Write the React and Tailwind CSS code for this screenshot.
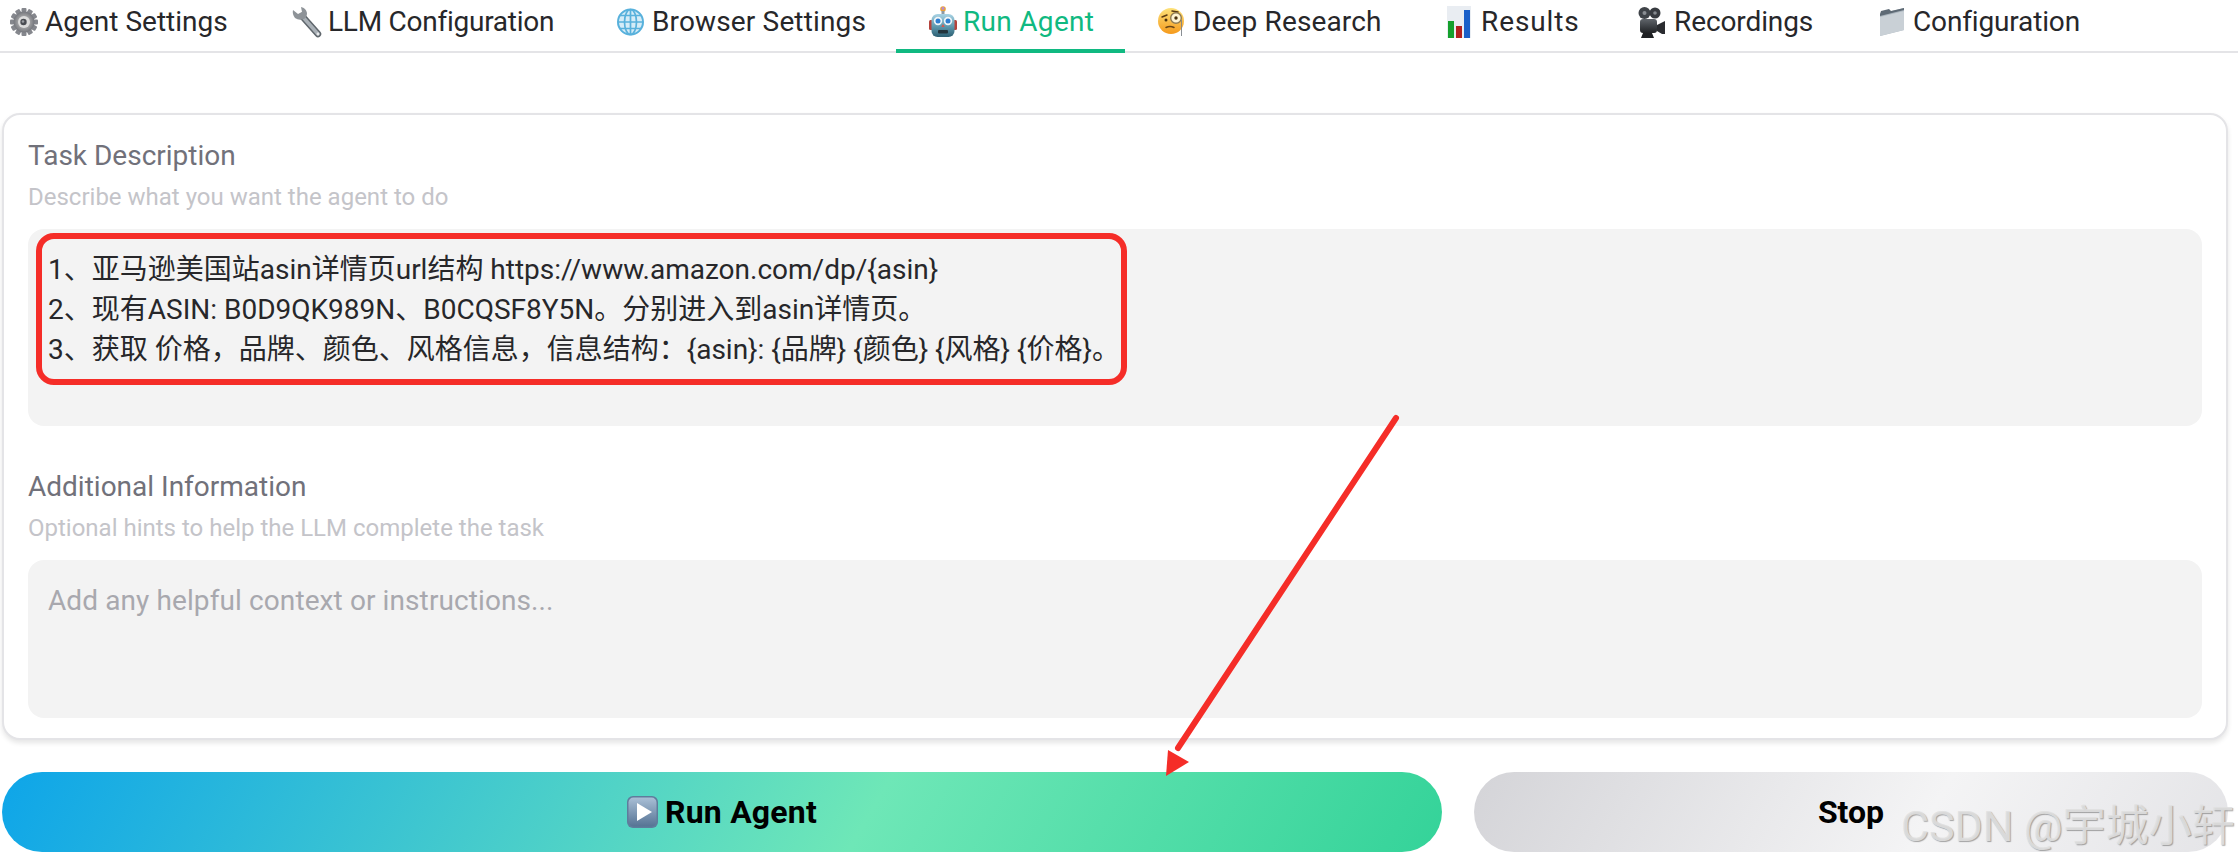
const F = "font-['Roboto','Noto_Sans_CJK_SC',sans-serif]";

function Gear() {
  const teeth = [0, 30, 60, 90, 120, 150];
  return (
    <svg width="28" height="30" viewBox="0 0 28 30" className="shrink-0">
      <defs>
        <radialGradient id="g1"><stop offset="0.35" stopColor="#b5b5b5" /><stop offset="1" stopColor="#74767c" /></radialGradient>
      </defs>
      {teeth.map((a) => (
        <rect key={a} x="11.5" y="1" width="5" height="28" rx="1" fill="#85878d" transform={`rotate(${a} 14 15)`} />
      ))}
      <circle cx="14" cy="15" r="10.5" fill="url(#g1)" />
      <circle cx="14" cy="15" r="6" fill="#dcdcdc" />
      <circle cx="13.5" cy="15" r="3.2" fill="#4a4d53" />
      <circle cx="13" cy="14.5" r="1.3" fill="#9a9da2" />
    </svg>
  );
}
function Wrench() {
  return (
    <svg width="32" height="34" viewBox="0 0 32 34" className="shrink-0" fill="none">
      <path d="M27 29 L11 11" stroke="#5f666c" strokeWidth="6.5" strokeLinecap="round" />
      <path d="M27 29 L11 11" stroke="#aab1b7" strokeWidth="3.5" strokeLinecap="round" />
      <path d="M2 5 L7 9 L11 7 L10 2 Q15 3 16 8 Q16 12 13 14 Q8 16 4 13 Q1 9 2 5Z" fill="#8e9398" />
      <circle cx="27" cy="29" r="1.4" fill="#e8eaec" />
    </svg>
  );
}
function Globe() {
  return (
    <svg width="27" height="28" viewBox="0 0 27 28" className="shrink-0" fill="none">
      <circle cx="13.5" cy="14" r="13" fill="#d5ecf7" />
      <circle cx="13.5" cy="14" r="12.5" stroke="#58b1dc" strokeWidth="2" />
      <ellipse cx="13.5" cy="14" rx="6" ry="12.5" stroke="#58b1dc" strokeWidth="1.7" />
      <path d="M13.5 1.5v25M1 14h25M3 7.5h21M3 20.5h21" stroke="#58b1dc" strokeWidth="1.7" />
    </svg>
  );
}
function Robot() {
  return (
    <svg width="28" height="32" viewBox="0 0 28 32" className="shrink-0">
      <defs>
        <linearGradient id="g4" x1="0" y1="0" x2="0" y2="1"><stop offset="0" stopColor="#a9d3e4" /><stop offset="0.55" stopColor="#5d98ad" /><stop offset="1" stopColor="#2c5f72" /></linearGradient>
      </defs>
      <circle cx="14" cy="3" r="2.8" fill="#e9a13c" />
      <circle cx="14" cy="2.4" r="1.3" fill="#b58ad8" />
      <rect x="12.5" y="5" width="3" height="4" fill="#8d99a3" />
      <rect x="0" y="14" width="4" height="10" rx="1.5" fill="#b5433c" />
      <rect x="24" y="14" width="4" height="10" rx="1.5" fill="#b5433c" />
      <rect x="2.5" y="8" width="23" height="23" rx="6" fill="url(#g4)" />
      <circle cx="9" cy="15" r="4.2" fill="#f1f6f8" />
      <circle cx="19" cy="15" r="4.2" fill="#f1f6f8" />
      <circle cx="9" cy="15" r="2.5" fill="#2f7fd0" />
      <circle cx="19" cy="15" r="2.5" fill="#2f7fd0" />
      <path d="M14 18l1.7 3h-3.4z" fill="#d9574d" />
      <rect x="9" y="24" width="10" height="3.5" rx="1" fill="#23343c" />
    </svg>
  );
}
function Monocle() {
  return (
    <svg width="27" height="30" viewBox="0 0 27 30" className="shrink-0" fill="none">
      <defs>
        <linearGradient id="g2" x1="0" y1="0" x2="0" y2="1"><stop offset="0" stopColor="#fde27a" /><stop offset="1" stopColor="#f59a1c" /></linearGradient>
      </defs>
      <circle cx="13" cy="14" r="13" fill="url(#g2)" />
      <path d="M4 10l5-2M14 4l6 1" stroke="#5b3b12" strokeWidth="1.5" strokeLinecap="round" />
      <circle cx="8" cy="13" r="1.5" fill="#4a3210" />
      <circle cx="18" cy="11" r="5.3" fill="#fff4d2" stroke="#8e7a52" strokeWidth="1.4" />
      <circle cx="18" cy="11" r="1.7" fill="#4a3210" />
      <path d="M8 20.5q4-2 8 0" stroke="#6a4515" strokeWidth="1.5" strokeLinecap="round" />
      <path d="M23.5 13v16" stroke="#7d8288" strokeWidth="0.9" />
    </svg>
  );
}
function Chart() {
  return (
    <svg width="24" height="32" viewBox="0 0 24 32" className="shrink-0">
      <rect width="24" height="32" fill="#e9edf2" />
      <rect x="1" y="15" width="6" height="17" fill="#14a02c" />
      <rect x="9" y="20" width="6" height="12" fill="#b2211f" />
      <rect x="17" y="4" width="6" height="28" fill="#1a5fc8" />
    </svg>
  );
}
function Camera() {
  return (
    <svg width="28" height="32" viewBox="0 0 28 32" className="shrink-0">
      <defs>
        <linearGradient id="g5" x1="0" y1="0" x2="0" y2="1"><stop offset="0" stopColor="#5f646a" /><stop offset="1" stopColor="#1f2124" /></linearGradient>
      </defs>
      <circle cx="6.5" cy="7" r="6" fill="#3f4348" />
      <circle cx="6.5" cy="7" r="2" fill="#8a8e93" />
      <circle cx="17" cy="7" r="5.5" fill="#383b40" />
      <circle cx="17" cy="7" r="1.8" fill="#85898e" />
      <rect x="2" y="13" width="17" height="14" rx="3" fill="url(#g5)" />
      <path d="M19 19l8-4v13h-3l-5-3z" fill="#2a2c30" />
      <path d="M5 27h9l2 5H3z" fill="#1e2023" />
    </svg>
  );
}
function Folder() {
  return (
    <svg width="26" height="30" viewBox="0 0 26 30" className="shrink-0">
      <path d="M1 7 L25 1 V23 L1 29Z" fill="#aab4bd" />
      <path d="M1 7 L2 4 L10 2 L12 4 L25 1 V3 L1 9Z" fill="#5e6a75" />
      <path d="M1 10 L25 4 V23 L1 29Z" fill="#c9d0d6" />
    </svg>
  );
}
function Play() {
  return (
    <svg width="31" height="32" viewBox="0 0 31 32" className="shrink-0">
      <defs>
        <linearGradient id="g3" x1="0" y1="0" x2="0" y2="1"><stop offset="0" stopColor="#a9bfd6" /><stop offset="1" stopColor="#567394" /></linearGradient>
      </defs>
      <rect width="31" height="32" rx="6" fill="#5f7c9c" />
      <rect x="1.5" y="1.5" width="28" height="29" rx="5" fill="url(#g3)" />
      <path d="M10 7 L25 16 L10 25Z" fill="#fff" />
    </svg>
  );
}

const tabs = [
  { w: "w-[281px]", gap: "gap-[7px]", I: Gear, t: "Agent Settings", sp: "tracking-[0px]" },
  { w: "w-[326px]", gap: "gap-[5px]", I: Wrench, t: "LLM Configuration", sp: "tracking-[-0.25px]" },
  { w: "w-[312px]", gap: "gap-[8px]", I: Globe, t: "Browser Settings", sp: "tracking-[0.15px]" },
  { w: "w-[229px]", gap: "gap-[6px]", I: Robot, t: "Run Agent", active: true, sp: "tracking-[0.3px]" },
  { w: "w-[289px]", gap: "gap-[8px]", I: Monocle, t: "Deep Research", sp: "tracking-[0.15px]" },
  { w: "w-[191px]", gap: "gap-[10px]", I: Chart, t: "Results", sp: "tracking-[0.9px]" },
  { w: "w-[241px]", gap: "gap-[8px]", I: Camera, t: "Recordings", sp: "tracking-[-0.1px]" },
  { w: "w-[268px]", gap: "gap-[8px]", I: Folder, t: "Configuration", sp: "tracking-[-0.15px]" },
];

function Tab({ w, gap, I, t, active, sp }) {
  return (
    <div className={`${w} shrink-0 h-[53px] pl-[33px] flex items-center pb-[5px] ${gap} border-b-[4px] ${active ? "border-[#10b981] text-[#10b981]" : "border-transparent text-[#27272a]"} text-[28px]`}>
      <I />
      <span className={`whitespace-nowrap ${sp}`}>{t}</span>
    </div>
  );
}

function Field({ title, hint, height, children, titleTop }) {
  return (
    <div className={titleTop}>
      <div className="text-[28px] leading-[34px] text-[#71717a]">{title}</div>
      <div className="text-[24px] leading-[30px] mt-[9px] text-[#c4c4c9]">{hint}</div>
      <div className={`${height} mt-[17px] bg-[#f3f3f3] rounded-[16px] px-[20px] pt-[21px] text-[28px] leading-[40px]`}>
        {children}
      </div>
    </div>
  );
}

export default function App() {
  return (
    <div className={`relative w-[2238px] h-[862px] overflow-hidden bg-white ${F}`}>
      <div className="flex ml-[-23px] w-[2261px] h-[53px] relative">
        <div className="absolute left-0 right-0 bottom-0 h-[2px] bg-[#e4e4e7]" />
        {tabs.map((x) => (
          <div key={x.t} className="relative"><Tab {...x} /></div>
        ))}
      </div>

      <div className="mt-[60px] ml-[2px] w-[2226px] h-[627px] rounded-[18px] border-2 border-[#e4e4e7] shadow-[0_3px_5px_rgba(0,0,0,0.1)] bg-white px-[24px] pt-[24px]">
        <Field title="Task Description" hint="Describe what you want the agent to do" height="h-[197px]">
          <div className="text-[#27272a]">1、亚马逊美国站asin详情页url结构 https://www.amazon.com/dp/{"{asin}"}</div>
          <div className="text-[#27272a]">2、现有ASIN: B0D9QK989N、B0CQSF8Y5N。分别进入到asin详情页。</div>
          <div className="text-[#27272a]">3、获取 价格，品牌、颜色、风格信息，信息结构：{"{asin}: {品牌} {颜色} {风格} {价格}"}。</div>
        </Field>
        <Field titleTop="mt-[44px]" title="Additional Information" hint="Optional hints to help the LLM complete the task" height="h-[158px]">
          <div className="text-[#a8a8ae] tracking-[0.1px]">Add any helpful context or instructions...</div>
        </Field>
      </div>

      <div className="flex gap-[32px] ml-[2px] mt-[32px] w-[2226px]">
        <div className="w-[1440px] h-[80px] rounded-[40px] flex items-center justify-center gap-[7px] bg-[linear-gradient(120deg,#0ea5e9_0%,#6ee7b7_60%,#34d399_100%)] font-bold text-[32px] tracking-[0.2px] text-black">
          <Play />
          <span>Run Agent</span>
        </div>
        <div className="flex-1 h-[80px] rounded-[40px] flex items-center justify-center bg-[linear-gradient(120deg,#d4d4d8_0%,#f4f4f5_60%,#e4e4e7_100%)] font-bold text-[32px] text-black">
          Stop
        </div>
      </div>

      <div className="absolute left-[36px] top-[233px] w-[1091px] h-[152px] rounded-[18px] border-[6px] border-[#f52d28]" />

      <svg className="absolute inset-0 pointer-events-none" width="2238" height="862" viewBox="0 0 2238 862" fill="none">
        <path d="M1396 418 L1178 748" stroke="#f52d28" strokeWidth="6" strokeLinecap="round" />
        <path d="M1166 776 L1168 750 L1189 762Z" fill="#f52d28" />
      </svg>

      <div className="absolute left-[1901px] top-[800px] text-[43px] leading-[52px] whitespace-nowrap text-[rgba(225,225,225,0.9)] [text-shadow:1px_1px_1px_rgba(110,110,110,0.6)]">CSDN @宇城小轩</div>
    </div>
  );
}
